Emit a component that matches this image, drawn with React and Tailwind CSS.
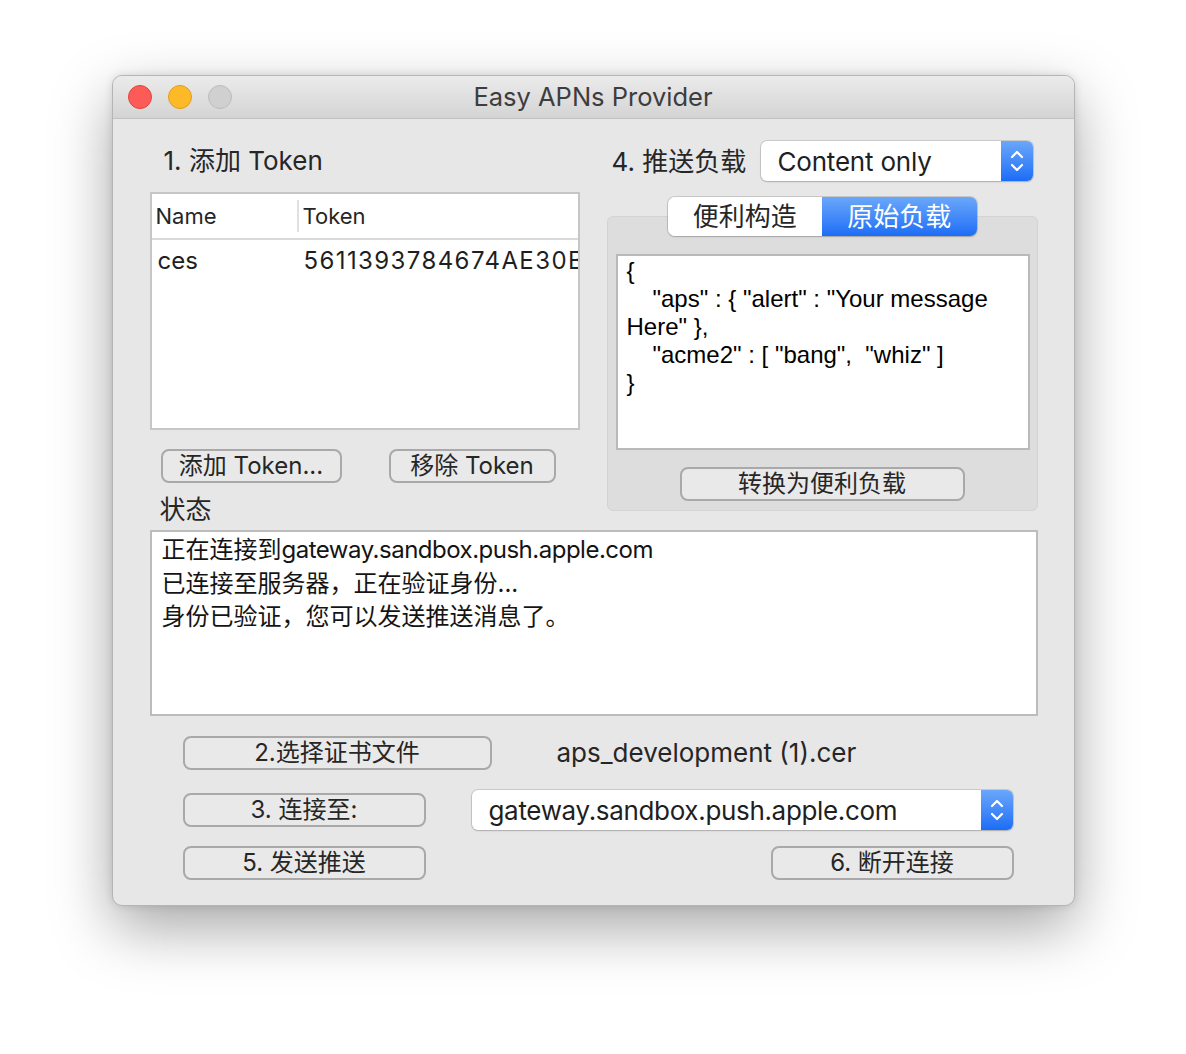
import React from 'react';

const FONT = "font-['Inter','Noto_Sans_CJK_SC',sans-serif]";

const Stepper = () => (
    <div className="flex h-full w-[32px] items-center justify-center rounded-r-[6px] bg-gradient-to-b from-[#6aa7fa] to-[#1b6cf6]">
        <svg width="16" height="26" viewBox="0 0 16 26" fill="none" stroke="white" strokeWidth="2.2" strokeLinecap="round" strokeLinejoin="round">
            <path d="M3 9 L8 4 L13 9" />
            <path d="M3 17 L8 22 L13 17" />
        </svg>
    </div>
);

const PopUp = ({ label, className, labelClass = '' }) => (
    <div className={`flex h-[40px] items-stretch rounded-[6px] bg-white shadow-[0_0_0_1px_rgba(0,0,0,0.12),0_1px_2px_rgba(0,0,0,0.15)] ${className}`}>
        <span className={`flex flex-1 items-center pl-[17px] text-[26px] text-[#1f1f1f] ${labelClass}`}>{label}</span>
        <Stepper />
    </div>
);

const PushButton = ({ children, className }) => (
    <button className={`flex h-[34px] items-center justify-center rounded-[8px] border-2 border-[#a9a9a9] bg-[#e9e9e9] text-[24px] leading-none text-[#262626] ${className}`}>
        {children}
    </button>
);

const TrafficLight = ({ color, ring }) => (
    <span className={`block h-[24px] w-[24px] rounded-full border ${color} ${ring}`} />
);

const App = () => {
    return (
        <div className={`h-[1054px] w-full bg-white pt-[75px] ${FONT}`}>
            <div className="mx-auto h-[831px] w-[963px] overflow-hidden rounded-[10px] border border-[#b5b5b5] bg-[#e7e7e7] shadow-[0_22px_60px_rgba(0,0,0,0.35),0_0_8px_rgba(0,0,0,0.12)]">
                {/* Title bar */}
                <div className="relative flex h-[43px] items-center border-b border-[#c2c2c2] bg-gradient-to-b from-[#ebebeb] to-[#d4d4d4]">
                    <div className="flex gap-[16px] pl-[15px]">
                        <TrafficLight color="bg-[#fc5b57]" ring="border-[#e2453f]" />
                        <TrafficLight color="bg-[#fdb927]" ring="border-[#de9f1b]" />
                        <TrafficLight color="bg-[#d0d0d0]" ring="border-[#bcbcbc]" />
                    </div>
                    <div className="absolute inset-0 flex items-center justify-center text-[25.5px] text-[#3d3d3d]">
                        Easy APNs Provider
                    </div>
                </div>

                {/* Content */}
                <div className="pl-[37px] pr-[36px]">
                    <div className="flex">
                        {/* Left column */}
                        <div className="w-[430px]">
                            <div className="mt-[26px] h-[32px] pl-[14px] text-[26px] leading-[32px] text-[#262626]">1. 添加 Token</div>
                            <div className="mt-[15px] h-[238px] overflow-hidden border-2 border-[#c6c6c6] bg-white">
                                <div className="flex h-[46px] items-center border-b-2 border-[#dadada] text-[22px] text-[#262626]">
                                    <span className="w-[145px] pl-[4px]">Name</span>
                                    <span className="h-[32px] w-[2px] bg-[#e0e0e0]" />
                                    <span className="pl-[4px]">Token</span>
                                </div>
                                <div className="flex h-[42px] items-center whitespace-nowrap text-[24px] text-[#1f1f1f]">
                                    <span className="w-[152px] shrink-0 pl-[6px]">ces</span>
                                    <span className="tracking-[1.4px]">5611393784674AE30B</span>
                                </div>
                            </div>
                            <div className="mt-[19px] flex">
                                <PushButton className="ml-[11px] w-[181px]">添加 Token...</PushButton>
                                <PushButton className="ml-[47px] w-[167px]">移除 Token</PushButton>
                            </div>
                            <div className="mt-[11px] h-[32px] pl-[10px] text-[26px] leading-[32px] text-[#262626]">状态</div>
                        </div>

                        {/* Right column */}
                        <div className="ml-[27px] w-[431px]">
                            <div className="mt-[22px] flex h-[40px] items-center">
                                <span className="pl-[5px] text-[26px] text-[#262626]">4. 推送负载</span>
                                <PopUp label="Content only" className="ml-auto mr-[5px] w-[272px]" labelClass="tracking-[-0.2px]" />
                            </div>
                            <div className="mt-[16px] flex justify-center">
                                <div className="relative z-10 flex h-[39px] w-[309px] overflow-hidden rounded-[7px] shadow-[0_0_0_1px_rgba(0,0,0,0.13),0_1px_2px_rgba(0,0,0,0.15)]">
                                    <div className="flex flex-1 items-center justify-center bg-white text-[26px] text-[#262626]">便利构造</div>
                                    <div className="flex flex-1 items-center justify-center bg-gradient-to-b from-[#6aa7fa] to-[#1b6cf6] text-[26px] text-white">原始负载</div>
                                </div>
                            </div>
                            <div className="-mt-[20px] h-[295px] rounded-[6px] border border-[#d3d3d3] bg-[#dddddd]">
                                <div className="ml-[8px] mt-[37px] h-[196px] w-[414px] border-2 border-[#b9b9b9] bg-white pl-[9px] pt-[1px] font-['Liberation_Sans',sans-serif] text-[24px] leading-[28px] text-black">
                                    <div>{'{'}</div>
                                    <div className="pl-[26px]">"aps" : {'{'} "alert" : "Your message</div>
                                    <div>Here" {'}'},</div>
                                    <div className="whitespace-pre pl-[26px]">{'"acme2" : [ "bang",  "whiz" ]'}</div>
                                    <div>{'}'}</div>
                                </div>
                                <div className="mt-[17px] flex justify-center">
                                    <PushButton className="w-[285px]">转换为便利负载</PushButton>
                                </div>
                            </div>
                        </div>
                    </div>

                    {/* Status */}
                    <div className="mt-[4px] h-[186px] w-[888px] border-2 border-[#bcbcbc] bg-white pl-[10px] pt-[1px] text-[24px] leading-[33.5px] text-[#141414]">
                        <div>正在连接到<span className="tracking-[-0.5px]">gateway.sandbox.push.apple.com</span></div>
                        <div>已连接至服务器，正在验证身份...</div>
                        <div>身份已验证，您可以发送推送消息了。</div>
                    </div>

                    {/* Bottom controls */}
                    <div className="mt-[20px] flex h-[34px] items-center">
                        <PushButton className="ml-[33px] w-[309px]">2.选择证书文件</PushButton>
                        <span className="ml-[65px] text-[26px] leading-[34px] text-[#262626]">aps_development (1).cer</span>
                    </div>
                    <div className="mt-[20px] flex h-[40px] items-center">
                        <PushButton className="ml-[33px] w-[243px]">3. 连接至:</PushButton>
                        <PopUp label="gateway.sandbox.push.apple.com" className="ml-[46px] w-[541px]" labelClass="tracking-[-0.33px]" />
                    </div>
                    <div className="mt-[16px] flex">
                        <PushButton className="ml-[33px] w-[243px]">5. 发送推送</PushButton>
                        <PushButton className="ml-[345px] w-[243px]">6. 断开连接</PushButton>
                    </div>
                </div>
            </div>
        </div>
    );
};

export default App;
